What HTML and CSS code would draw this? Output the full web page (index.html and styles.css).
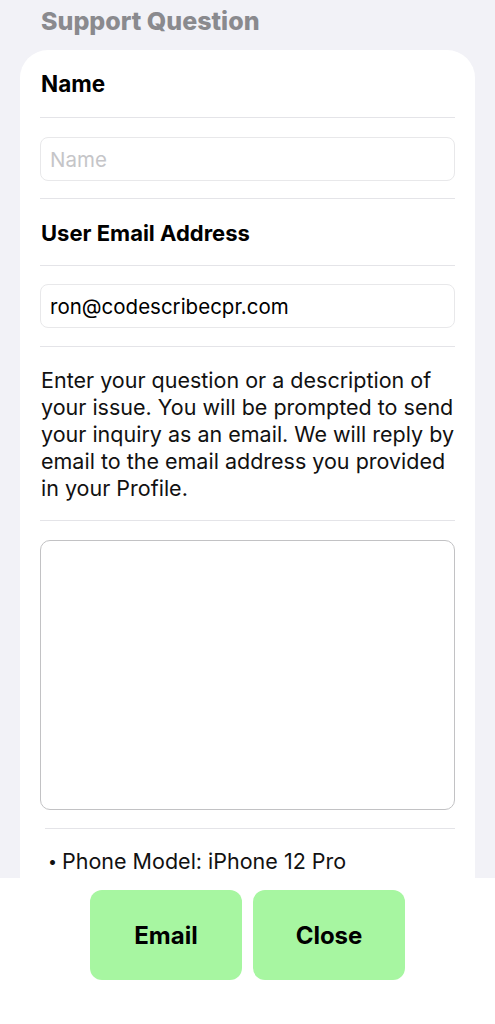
FILE: index.html
```html
<!DOCTYPE html>
<html lang="en">
<head>
    <meta charset="UTF-8">
    <meta name="viewport" content="width=device-width, initial-scale=1.0">
    <title>Support Question</title>
    <link rel="stylesheet" href="styles.css">
</head>
<body>
    <div class="page">
        <div class="scroll">
            <h1 class="title">Support Question</h1>
            <div class="card">
                <div class="row label">Name</div>
                <div class="row field">
                    <input type="text" class="input" placeholder="Name">
                </div>
                <div class="row label">User Email Address</div>
                <div class="row field">
                    <input type="text" class="input" value="ron@codescribecpr.com">
                </div>
                <div class="row info">
                    Enter your question or a description of your issue. You will be prompted to send your inquiry as an email. We will reply by email to the email address you provided in your Profile.
                </div>
                <div class="field inset">
                    <textarea class="question"></textarea>
                </div>
                <ul class="device">
                    <li>Phone Model: iPhone 12 Pro</li>
                </ul>
            </div>
        </div>
        <div class="footer">
            <button class="btn" type="button">Email</button>
            <button class="btn" type="button">Close</button>
        </div>
    </div>
</body>
</html>
```

FILE: styles.css
```css
body {
    margin: 0;
    padding: 0;
    background-color: #f2f2f7;
    font-family: Inter, "Noto Sans", sans-serif;
    color: #000;
}
.page {
    height: 1024px;
    display: flex;
    flex-direction: column;
}
.scroll {
    flex: 1;
    overflow: hidden;
}
.title {
    margin: 0;
    padding: 7px 41px 0;
    font-size: 25px;
    line-height: 28px;
    font-weight: 800;
    color: #8a8a8e;
    height: 43px;
    box-sizing: border-box;
}
.card {
    margin: 7px 20px 0;
    padding: 0 20px;
    background-color: #fff;
    border-radius: 28px 28px 0 0;
    min-height: 900px;
}
.row {
    border-bottom: 1px solid #e4e4e8;
}
.label {
    padding: 22px 1px 20px;
    font-size: 22px;
    line-height: 24px;
    font-weight: 700;
}
.label:first-child {
    padding-bottom: 21px;
    font-size: 22.5px;
}
.field {
    padding: 18px 0;
}
.field:nth-child(2) {
    padding: 19px 0 17px;
}
.input {
    display: block;
    width: 100%;
    height: 44px;
    box-sizing: border-box;
    padding: 0 9px;
    border: 1px solid #e8e8ea;
    border-radius: 8px;
    font-family: inherit;
    font-size: 20.5px;
    color: #000;
    outline: none;
}
.input::placeholder {
    color: #c5c5c8;
}
.info {
    padding: 20px 1px 18px;
    font-size: 21.5px;
    line-height: 27px;
    color: #111;
}
.inset {
    padding: 19px 0 19px;
    position: relative;
}
/* separator below the question box is inset a little */
.inset::after {
    content: "";
    position: absolute;
    left: 5px;
    right: 0;
    bottom: 0;
    border-bottom: 1px solid #e4e4e8;
}
.question {
    display: block;
    width: 100%;
    height: 270px;
    box-sizing: border-box;
    border: 1px solid #c2c2c4;
    border-radius: 10px;
    resize: none;
    outline: none;
}
.device {
    list-style: none;
    margin: 0;
    padding: 20px 0 0 8px;
    font-size: 21.5px;
    line-height: 24px;
    color: #111;
}
.device li::before {
    content: "\2022";
    font-size: 16px;
    margin-right: 5px;
    vertical-align: 2px;
}
.footer {
    height: 146px;
    flex-shrink: 0;
    background-color: #fff;
    display: flex;
    justify-content: center;
    align-items: flex-start;
    gap: 11px;
    padding-top: 12px;
    box-sizing: border-box;
}
.btn {
    width: 152px;
    height: 90px;
    border: none;
    border-radius: 12px;
    background-color: #a7f6a1;
    font-family: inherit;
    font-size: 24px;
    font-weight: 700;
    color: #000;
    cursor: pointer;
}
```
